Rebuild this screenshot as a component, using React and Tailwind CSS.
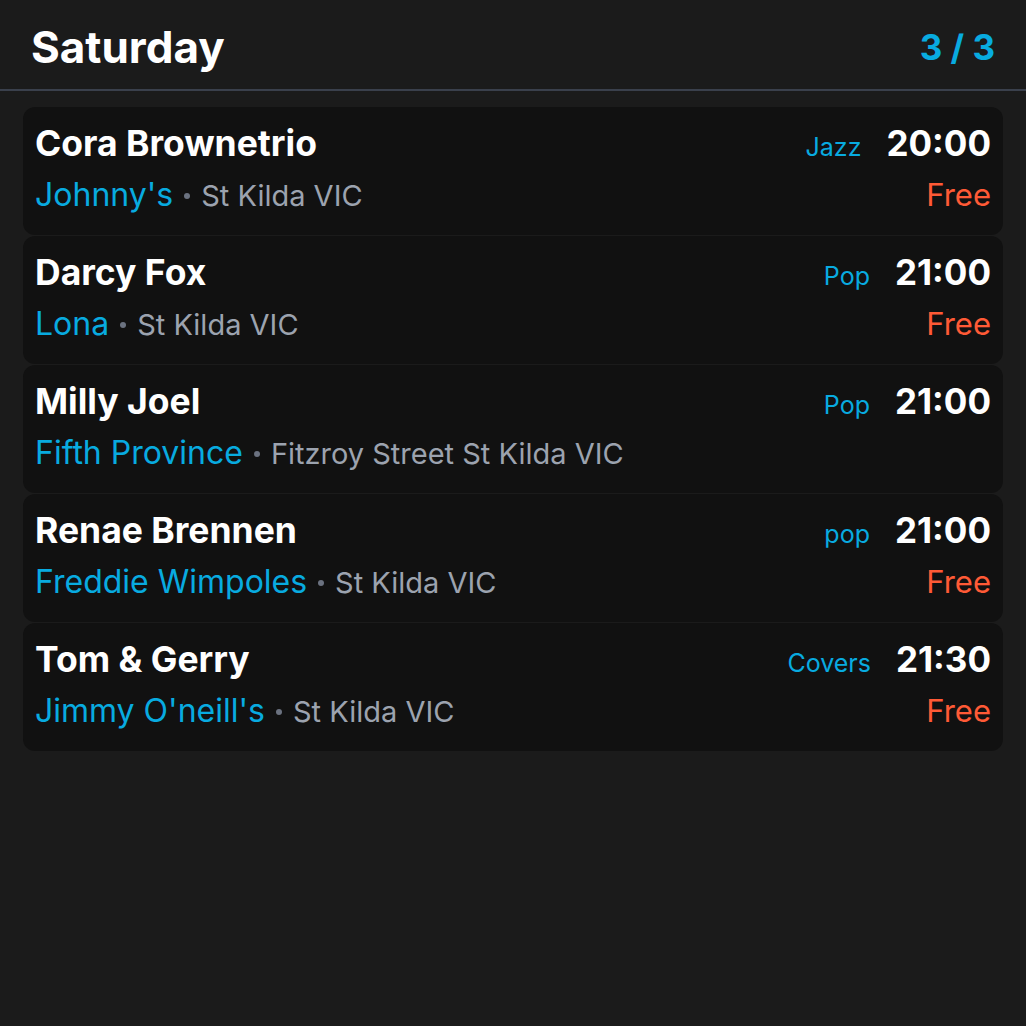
import React from "react";

const events = [
  { name: "Cora Brownetrio", venue: "Johnny's", loc: "St Kilda VIC", genre: "Jazz", time: "20:00", free: true },
  { name: "Darcy Fox", venue: "Lona", loc: "St Kilda VIC", genre: "Pop", time: "21:00", free: true },
  { name: "Milly Joel", venue: "Fifth Province", loc: "Fitzroy Street St Kilda VIC", genre: "Pop", time: "21:00", free: false },
  { name: "Renae Brennen", venue: "Freddie Wimpoles", loc: "St Kilda VIC", genre: "pop", time: "21:00", free: true },
  { name: "Tom & Gerry", venue: "Jimmy O'neill's", loc: "St Kilda VIC", genre: "Covers", time: "21:30", free: true },
];

export default function App() {
  return (
    <div
      className="w-[1026px] h-[1026px] bg-[#1b1b1b] overflow-hidden"
      style={{ fontFamily: "Inter, 'Noto Sans', sans-serif" }}
    >
      <div className="h-[89px] flex items-start justify-between px-[31px] pt-[22px]">
        <div className="text-[44px] leading-[50px] font-bold text-white">Saturday</div>
        <div className="text-[35px] leading-[50px] font-bold text-[#08abe0]">3 / 3</div>
      </div>
      <div className="h-[2px] bg-[#3a404c]" />
      <div className="flex flex-col gap-px px-[23px] pt-[16px]">
        {events.map((e, i) => (
          <div key={i} className="h-[128px] rounded-[12px] bg-[#111111] px-[12px] pt-[16px]">
            <div className="flex items-baseline h-[40px]">
              <div className="text-[35.5px] leading-[40px] font-bold text-white">{e.name}</div>
              <div className="ml-auto text-[25px] leading-[40px] text-[#08abe0] mr-[25px]">{e.genre}</div>
              <div className="text-[35px] leading-[40px] font-bold text-white">{e.time}</div>
            </div>
            <div className="flex items-baseline mt-[14px] h-[36px]">
              <div className="text-[32px] leading-[36px] text-[#08abe0]">{e.venue}</div>
              <div className="w-[6px] h-[6px] rounded-full bg-[#6b7280] mx-[11px] self-center mt-[2px]" />
              <div className="text-[29px] leading-[36px] text-[#9ca3af]">{e.loc}</div>
              {e.free && (
                <div className="ml-auto text-[31px] leading-[36px] text-[#ff5a36]">Free</div>
              )}
            </div>
          </div>
        ))}
      </div>
    </div>
  );
}
